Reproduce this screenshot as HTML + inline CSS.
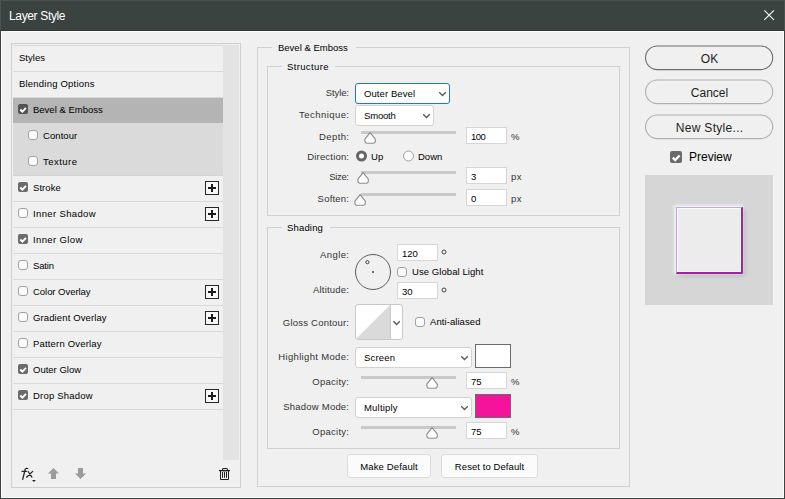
<!DOCTYPE html><html><head><meta charset="utf-8"><style>
html,body{margin:0;padding:0}
body{width:785px;height:499px;overflow:hidden;position:relative;background:#f0f0f0;font-family:"Liberation Sans",sans-serif}
.a{position:absolute}
.t{position:absolute;white-space:nowrap}
</style></head><body>
<div class="a" style="left:0px;top:0px;width:785px;height:31px;background:#3b4341"></div>
<div class="a" style="left:0px;top:0px;width:785px;height:1px;background:#4b5351"></div>
<div class="a" style="left:0px;top:0px;width:1px;height:30px;background:#4b5351"></div>
<div class="a" style="left:784px;top:0px;width:1px;height:30px;background:#4b5351"></div>
<div class="a" style="left:1px;top:30px;width:783px;height:1px;background:#2f3735"></div>
<div class="a" style="left:0px;top:31px;width:1px;height:468px;background:#3b4341"></div>
<div class="a" style="left:784px;top:31px;width:1px;height:468px;background:#3b4341"></div>
<div class="a" style="left:0px;top:498px;width:785px;height:1px;background:#3b4341"></div>
<div class="a" style="left:1px;top:31px;width:1px;height:467px;background:#fdfdfd"></div>
<div class="a" style="left:783px;top:31px;width:1px;height:467px;background:#fdfdfd"></div>
<div class="a" style="left:1px;top:31px;width:783px;height:1px;background:#fdfdfd"></div>
<div class="a" style="left:1px;top:497px;width:783px;height:1px;background:#fdfdfd"></div>
<div id="t0" class="t" style="top:9px;font-size:12px;line-height:14px;color:#ffffff;letter-spacing:-0.350px;left:9px;">Layer Style</div>
<svg class="a" style="left:762px;top:8px" width="14" height="14" viewBox="0 0 14 14"><path d="M2.3 2.3 L11.9 11.9 M11.9 2.3 L2.3 11.9" stroke="#f4f4f4" stroke-width="1.2"/></svg>
<div class="a" style="left:11px;top:43px;width:230px;height:445px;border:1px solid #cfcfcf;box-sizing:border-box"></div>
<div class="a" style="left:223px;top:45px;width:16px;height:415px;background:#e3e3e3"></div>
<div class="a" style="left:13px;top:45px;width:210px;height:1px;background:#d9d9d9"></div>
<div class="a" style="left:13px;top:71px;width:210px;height:1px;background:#d9d9d9"></div>
<div class="a" style="left:13px;top:97px;width:210px;height:1px;background:#d9d9d9"></div>
<div class="a" style="left:13px;top:123px;width:210px;height:1px;background:#d9d9d9"></div>
<div class="a" style="left:13px;top:149px;width:210px;height:1px;background:#d9d9d9"></div>
<div class="a" style="left:13px;top:175px;width:210px;height:1px;background:#d9d9d9"></div>
<div class="a" style="left:13px;top:201px;width:210px;height:1px;background:#d9d9d9"></div>
<div class="a" style="left:13px;top:227px;width:210px;height:1px;background:#d9d9d9"></div>
<div class="a" style="left:13px;top:253px;width:210px;height:1px;background:#d9d9d9"></div>
<div class="a" style="left:13px;top:279px;width:210px;height:1px;background:#d9d9d9"></div>
<div class="a" style="left:13px;top:305px;width:210px;height:1px;background:#d9d9d9"></div>
<div class="a" style="left:13px;top:331px;width:210px;height:1px;background:#d9d9d9"></div>
<div class="a" style="left:13px;top:357px;width:210px;height:1px;background:#d9d9d9"></div>
<div class="a" style="left:13px;top:383px;width:210px;height:1px;background:#d9d9d9"></div>
<div class="a" style="left:13px;top:409px;width:210px;height:1px;background:#d9d9d9"></div>
<div class="a" style="left:13px;top:98px;width:210px;height:25px;background:#b4b4b4"></div>
<div class="a" style="left:13px;top:123px;width:210px;height:52px;background:#dadada"></div>
<div class="a" style="left:13px;top:175px;width:210px;height:1px;background:#d4d4d4"></div>
<div id="t1" class="t" style="top:52px;font-size:9.5px;line-height:11.5px;color:#000;letter-spacing:0.020px;left:19px;">Styles</div>
<div id="t2" class="t" style="top:78px;font-size:9.5px;line-height:11.5px;color:#000;letter-spacing:0.207px;left:19px;">Blending Options</div>
<div class="a" style="left:18px;top:104px;width:10px;height:10px;background:#535353;border-radius:2px;"><svg width="10" height="10" viewBox="0 0 10 10" style="position:absolute;left:0;top:0"><path d="M2.3 5.5 L4.4 7.6 L8 3.8" fill="none" stroke="#fff" stroke-width="1.9" stroke-linecap="butt" stroke-linejoin="miter"/></svg></div>
<div id="t3" class="t" style="top:104px;font-size:9.5px;line-height:11.5px;color:#000;left:33px;">Bevel &amp; Emboss</div>
<div class="a" style="left:28px;top:130px;width:10px;height:10px;background:#fbfbfb;border:1px solid #a2a2a2;box-sizing:border-box;border-radius:3px;"></div>
<div id="t4" class="t" style="top:130px;font-size:9.5px;line-height:11.5px;color:#000;letter-spacing:0.067px;left:43px;">Contour</div>
<div class="a" style="left:28px;top:156px;width:10px;height:10px;background:#fbfbfb;border:1px solid #a2a2a2;box-sizing:border-box;border-radius:3px;"></div>
<div id="t5" class="t" style="top:156px;font-size:9.5px;line-height:11.5px;color:#000;letter-spacing:0.483px;left:43px;">Texture</div>
<div class="a" style="left:18px;top:182px;width:10px;height:10px;background:#6b6b6b;border-radius:2px;"><svg width="10" height="10" viewBox="0 0 10 10" style="position:absolute;left:0;top:0"><path d="M2.3 5.5 L4.4 7.6 L8 3.8" fill="none" stroke="#fff" stroke-width="1.9" stroke-linecap="butt" stroke-linejoin="miter"/></svg></div>
<div id="t6" class="t" style="top:182px;font-size:9.5px;line-height:11.5px;color:#000;letter-spacing:0.060px;left:33px;">Stroke</div>
<div class="a" style="left:205px;top:181px;width:14px;height:14px;border:1px solid #262626;box-sizing:border-box;background:#f7f7f7"></div>
<div class="a" style="left:208px;top:187px;width:8px;height:2px;background:#1a1a1a"></div>
<div class="a" style="left:211px;top:184px;width:2px;height:8px;background:#1a1a1a"></div>
<div class="a" style="left:18px;top:208px;width:10px;height:10px;background:#fbfbfb;border:1px solid #a2a2a2;box-sizing:border-box;border-radius:3px;"></div>
<div id="t7" class="t" style="top:208px;font-size:9.5px;line-height:11.5px;color:#000;letter-spacing:0.364px;left:33px;">Inner Shadow</div>
<div class="a" style="left:205px;top:207px;width:14px;height:14px;border:1px solid #262626;box-sizing:border-box;background:#f7f7f7"></div>
<div class="a" style="left:208px;top:213px;width:8px;height:2px;background:#1a1a1a"></div>
<div class="a" style="left:211px;top:210px;width:2px;height:8px;background:#1a1a1a"></div>
<div class="a" style="left:18px;top:234px;width:10px;height:10px;background:#6b6b6b;border-radius:2px;"><svg width="10" height="10" viewBox="0 0 10 10" style="position:absolute;left:0;top:0"><path d="M2.3 5.5 L4.4 7.6 L8 3.8" fill="none" stroke="#fff" stroke-width="1.9" stroke-linecap="butt" stroke-linejoin="miter"/></svg></div>
<div id="t8" class="t" style="top:234px;font-size:9.5px;line-height:11.5px;color:#000;letter-spacing:0.367px;left:33px;">Inner Glow</div>
<div class="a" style="left:18px;top:260px;width:10px;height:10px;background:#fbfbfb;border:1px solid #a2a2a2;box-sizing:border-box;border-radius:3px;"></div>
<div id="t9" class="t" style="top:260px;font-size:9.5px;line-height:11.5px;color:#000;letter-spacing:-0.150px;left:33px;">Satin</div>
<div class="a" style="left:18px;top:286px;width:10px;height:10px;background:#fbfbfb;border:1px solid #a2a2a2;box-sizing:border-box;border-radius:3px;"></div>
<div id="t10" class="t" style="top:286px;font-size:9.5px;line-height:11.5px;color:#000;letter-spacing:-0.042px;left:33px;">Color Overlay</div>
<div class="a" style="left:205px;top:285px;width:14px;height:14px;border:1px solid #262626;box-sizing:border-box;background:#f7f7f7"></div>
<div class="a" style="left:208px;top:291px;width:8px;height:2px;background:#1a1a1a"></div>
<div class="a" style="left:211px;top:288px;width:2px;height:8px;background:#1a1a1a"></div>
<div class="a" style="left:18px;top:312px;width:10px;height:10px;background:#fbfbfb;border:1px solid #a2a2a2;box-sizing:border-box;border-radius:3px;"></div>
<div id="t11" class="t" style="top:312px;font-size:9.5px;line-height:11.5px;color:#000;letter-spacing:0.120px;left:33px;">Gradient Overlay</div>
<div class="a" style="left:205px;top:311px;width:14px;height:14px;border:1px solid #262626;box-sizing:border-box;background:#f7f7f7"></div>
<div class="a" style="left:208px;top:317px;width:8px;height:2px;background:#1a1a1a"></div>
<div class="a" style="left:211px;top:314px;width:2px;height:8px;background:#1a1a1a"></div>
<div class="a" style="left:18px;top:338px;width:10px;height:10px;background:#fbfbfb;border:1px solid #a2a2a2;box-sizing:border-box;border-radius:3px;"></div>
<div id="t12" class="t" style="top:338px;font-size:9.5px;line-height:11.5px;color:#000;letter-spacing:0.179px;left:33px;">Pattern Overlay</div>
<div class="a" style="left:18px;top:364px;width:10px;height:10px;background:#6b6b6b;border-radius:2px;"><svg width="10" height="10" viewBox="0 0 10 10" style="position:absolute;left:0;top:0"><path d="M2.3 5.5 L4.4 7.6 L8 3.8" fill="none" stroke="#fff" stroke-width="1.9" stroke-linecap="butt" stroke-linejoin="miter"/></svg></div>
<div id="t13" class="t" style="top:364px;font-size:9.5px;line-height:11.5px;color:#000;left:33px;">Outer Glow</div>
<div class="a" style="left:18px;top:390px;width:10px;height:10px;background:#6b6b6b;border-radius:2px;"><svg width="10" height="10" viewBox="0 0 10 10" style="position:absolute;left:0;top:0"><path d="M2.3 5.5 L4.4 7.6 L8 3.8" fill="none" stroke="#fff" stroke-width="1.9" stroke-linecap="butt" stroke-linejoin="miter"/></svg></div>
<div id="t14" class="t" style="top:390px;font-size:9.5px;line-height:11.5px;color:#000;letter-spacing:0.200px;left:33px;">Drop Shadow</div>
<div class="a" style="left:205px;top:389px;width:14px;height:14px;border:1px solid #262626;box-sizing:border-box;background:#f7f7f7"></div>
<div class="a" style="left:208px;top:395px;width:8px;height:2px;background:#1a1a1a"></div>
<div class="a" style="left:211px;top:392px;width:2px;height:8px;background:#1a1a1a"></div>
<svg class="a" style="left:18px;top:464px" width="20" height="20" viewBox="0 0 20 20"><path d="M9.7 4.5 C8.3 3.9 7.3 4.5 7.0 6.0 L4.7 15.4 M4.1 7.4 H8.3 M10.1 7.5 L13.9 13.1 M14.7 7.4 L8.6 13.2" fill="none" stroke="#222" stroke-width="1.25" stroke-linecap="round"/><path d="M14 16.1 H17.9 L15.95 17.9 Z" fill="#222"/></svg>
<svg class="a" style="left:47px;top:467px" width="13" height="13" viewBox="0 0 13 13"><path d="M6.5 1 L12 6.5 L9 6.5 L9 12 L4 12 L4 6.5 L1 6.5Z" fill="#9b9b9b"/></svg>
<svg class="a" style="left:74px;top:467px" width="13" height="13" viewBox="0 0 13 13"><path d="M6.5 12 L12 6.5 L9 6.5 L9 1 L4 1 L4 6.5 L1 6.5Z" fill="#9b9b9b"/></svg>
<svg class="a" style="left:218px;top:467px" width="14" height="14" viewBox="0 0 14 14"><path d="M1 3.6 H12" fill="none" stroke="#222" stroke-width="1.3"/><rect x="4.5" y="1.5" width="5" height="2.2" rx="1" fill="none" stroke="#222" stroke-width="1.1"/><path d="M2.5 3.5 V12.5 H10.5 V3.5 M4.5 5 V10.8 M6.5 5 V10.8 M8.5 5 V10.8" fill="none" stroke="#222" stroke-width="1"/></svg>
<div class="a" style="left:257px;top:47px;width:373px;height:440px;border:1px solid #d0d0d0;box-sizing:border-box"></div>
<div class="a" style="left:272px;top:47px;width:84px;height:1px;background:#f0f0f0"></div>
<div id="t15" class="t" style="top:42px;font-size:9.5px;line-height:11.5px;color:#000;left:278px;">Bevel &amp; Emboss</div>
<div class="a" style="left:267px;top:66px;width:353px;height:150px;border:1px solid #d0d0d0;box-sizing:border-box"></div>
<div class="a" style="left:282px;top:66px;width:53px;height:1px;background:#f0f0f0"></div>
<div id="t16" class="t" style="top:61px;font-size:9.5px;line-height:11.5px;color:#000;letter-spacing:0.362px;left:287px;">Structure</div>
<div class="a" style="left:267px;top:227px;width:353px;height:222px;border:1px solid #d0d0d0;box-sizing:border-box"></div>
<div class="a" style="left:282px;top:227px;width:48px;height:1px;background:#f0f0f0"></div>
<div id="t17" class="t" style="top:222px;font-size:9.5px;line-height:11.5px;color:#000;letter-spacing:0.167px;left:287px;">Shading</div>
<div id="t18" class="t" style="top:87px;font-size:9.5px;line-height:11.5px;color:#333;letter-spacing:-0.100px;right:436.100px;">Style:</div>
<div id="t19" class="t" style="top:109px;font-size:9.5px;line-height:11.5px;color:#333;letter-spacing:0.444px;right:435.556px;">Technique:</div>
<div id="t20" class="t" style="top:131px;font-size:9.5px;line-height:11.5px;color:#333;letter-spacing:0.400px;right:435.600px;">Depth:</div>
<div id="t21" class="t" style="top:151px;font-size:9.5px;line-height:11.5px;color:#333;letter-spacing:0.189px;right:435.811px;">Direction:</div>
<div id="t22" class="t" style="top:171px;font-size:9.5px;line-height:11.5px;color:#333;letter-spacing:-0.350px;right:436.350px;">Size:</div>
<div id="t23" class="t" style="top:193px;font-size:9.5px;line-height:11.5px;color:#333;letter-spacing:0.217px;right:435.783px;">Soften:</div>
<div id="t24" class="t" style="top:249px;font-size:9.5px;line-height:11.5px;color:#333;letter-spacing:0.400px;right:435.600px;">Angle:</div>
<div id="t25" class="t" style="top:284px;font-size:9.5px;line-height:11.5px;color:#333;letter-spacing:0.225px;right:435.775px;">Altitude:</div>
<div id="t26" class="t" style="top:317px;font-size:9.5px;line-height:11.5px;color:#333;letter-spacing:0.215px;right:435.785px;">Gloss Contour:</div>
<div id="t27" class="t" style="top:351px;font-size:9.5px;line-height:11.5px;color:#333;letter-spacing:0.336px;right:435.664px;">Highlight Mode:</div>
<div id="t28" class="t" style="top:376px;font-size:9.5px;line-height:11.5px;color:#333;letter-spacing:0.257px;right:435.743px;">Opacity:</div>
<div id="t29" class="t" style="top:401px;font-size:9.5px;line-height:11.5px;color:#333;letter-spacing:0.209px;right:435.791px;">Shadow Mode:</div>
<div id="t30" class="t" style="top:426px;font-size:9.5px;line-height:11.5px;color:#333;letter-spacing:0.257px;right:435.743px;">Opacity:</div>
<div class="a" style="left:355px;top:83px;width:95px;height:21px;border:1px solid #1a75e0;box-sizing:border-box;border-radius:3px;background:#ffffff"></div>
<div id="t31" class="t" style="top:88px;font-size:9.5px;line-height:11.5px;color:#000;letter-spacing:0.090px;left:364px;">Outer Bevel</div>
<svg class="a" style="left:438px;top:91px" width="9" height="6" viewBox="0 0 9 6"><path d="M1.2 1.3 L4.5 4.5 L7.8 1.3" fill="none" stroke="#5a5a5a" stroke-width="1.35"/></svg>
<div class="a" style="left:355px;top:105px;width:79px;height:21px;border:1px solid #d2d2d2;box-sizing:border-box;border-radius:3px;background:#ffffff"></div>
<div id="t32" class="t" style="top:110px;font-size:9.5px;line-height:11.5px;color:#000;letter-spacing:-0.180px;left:364px;">Smooth</div>
<svg class="a" style="left:422px;top:113px" width="9" height="6" viewBox="0 0 9 6"><path d="M1.2 1.3 L4.5 4.5 L7.8 1.3" fill="none" stroke="#5a5a5a" stroke-width="1.35"/></svg>
<div class="a" style="left:355px;top:347px;width:117px;height:21px;border:1px solid #d2d2d2;box-sizing:border-box;border-radius:3px;background:#ffffff"></div>
<div id="t33" class="t" style="top:352px;font-size:9.5px;line-height:11.5px;color:#000;letter-spacing:0.200px;left:364px;">Screen</div>
<svg class="a" style="left:460px;top:355px" width="9" height="6" viewBox="0 0 9 6"><path d="M1.2 1.3 L4.5 4.5 L7.8 1.3" fill="none" stroke="#5a5a5a" stroke-width="1.35"/></svg>
<div class="a" style="left:355px;top:397px;width:117px;height:21px;border:1px solid #d2d2d2;box-sizing:border-box;border-radius:3px;background:#ffffff"></div>
<div id="t34" class="t" style="top:402px;font-size:9.5px;line-height:11.5px;color:#000;letter-spacing:0.200px;left:364px;">Multiply</div>
<svg class="a" style="left:460px;top:405px" width="9" height="6" viewBox="0 0 9 6"><path d="M1.2 1.3 L4.5 4.5 L7.8 1.3" fill="none" stroke="#5a5a5a" stroke-width="1.35"/></svg>
<div class="a" style="left:361px;top:131px;width:95px;height:3px;background:#c9c9c9"></div>
<svg class="a" style="left:364px;top:131px" width="13" height="14" viewBox="0 0 13 14"><path d="M6.1 1.7 L11.3 8.2 L11.3 10.1 Q11.3 12.3 9.1 12.3 L3.1 12.3 Q0.9 12.3 0.9 10.1 L0.9 8.2 Z" fill="#fcfdfe" stroke="#8c8c8c" stroke-width="1.1" stroke-linejoin="round"/></svg>
<div class="a" style="left:361px;top:171px;width:95px;height:3px;background:#c9c9c9"></div>
<svg class="a" style="left:357px;top:171px" width="13" height="14" viewBox="0 0 13 14"><path d="M6.1 1.7 L11.3 8.2 L11.3 10.1 Q11.3 12.3 9.1 12.3 L3.1 12.3 Q0.9 12.3 0.9 10.1 L0.9 8.2 Z" fill="#fcfdfe" stroke="#8c8c8c" stroke-width="1.1" stroke-linejoin="round"/></svg>
<div class="a" style="left:361px;top:193px;width:95px;height:3px;background:#c9c9c9"></div>
<svg class="a" style="left:354px;top:193px" width="13" height="14" viewBox="0 0 13 14"><path d="M6.1 1.7 L11.3 8.2 L11.3 10.1 Q11.3 12.3 9.1 12.3 L3.1 12.3 Q0.9 12.3 0.9 10.1 L0.9 8.2 Z" fill="#fcfdfe" stroke="#8c8c8c" stroke-width="1.1" stroke-linejoin="round"/></svg>
<div class="a" style="left:361px;top:376px;width:95px;height:3px;background:#c9c9c9"></div>
<svg class="a" style="left:426px;top:376px" width="13" height="14" viewBox="0 0 13 14"><path d="M6.1 1.7 L11.3 8.2 L11.3 10.1 Q11.3 12.3 9.1 12.3 L3.1 12.3 Q0.9 12.3 0.9 10.1 L0.9 8.2 Z" fill="#fcfdfe" stroke="#8c8c8c" stroke-width="1.1" stroke-linejoin="round"/></svg>
<div class="a" style="left:361px;top:426px;width:95px;height:3px;background:#c9c9c9"></div>
<svg class="a" style="left:426px;top:426px" width="13" height="14" viewBox="0 0 13 14"><path d="M6.1 1.7 L11.3 8.2 L11.3 10.1 Q11.3 12.3 9.1 12.3 L3.1 12.3 Q0.9 12.3 0.9 10.1 L0.9 8.2 Z" fill="#fcfdfe" stroke="#8c8c8c" stroke-width="1.1" stroke-linejoin="round"/></svg>
<div class="a" style="left:466px;top:127px;width:41px;height:17px;border:1px solid #d6d6d6;box-sizing:border-box;background:#fff"></div>
<div id="t35" class="t" style="top:131px;font-size:9.5px;line-height:11.5px;color:#000;letter-spacing:-0.500px;left:471px;">100</div>
<div class="a" style="left:466px;top:167px;width:41px;height:17px;border:1px solid #d6d6d6;box-sizing:border-box;background:#fff"></div>
<div id="t36" class="t" style="top:171px;font-size:9.5px;line-height:11.5px;color:#000;left:471px;">3</div>
<div class="a" style="left:466px;top:189px;width:41px;height:17px;border:1px solid #d6d6d6;box-sizing:border-box;background:#fff"></div>
<div id="t37" class="t" style="top:193px;font-size:9.5px;line-height:11.5px;color:#000;left:471px;">0</div>
<div class="a" style="left:397px;top:244px;width:41px;height:17px;border:1px solid #d6d6d6;box-sizing:border-box;background:#fff"></div>
<div id="t38" class="t" style="top:248px;font-size:9.5px;line-height:11.5px;color:#000;left:402px;">120</div>
<div class="a" style="left:397px;top:282px;width:41px;height:17px;border:1px solid #d6d6d6;box-sizing:border-box;background:#fff"></div>
<div id="t39" class="t" style="top:286px;font-size:9.5px;line-height:11.5px;color:#000;left:402px;">30</div>
<div class="a" style="left:466px;top:372px;width:41px;height:17px;border:1px solid #d6d6d6;box-sizing:border-box;background:#fff"></div>
<div id="t40" class="t" style="top:376px;font-size:9.5px;line-height:11.5px;color:#000;left:471px;">75</div>
<div class="a" style="left:466px;top:422px;width:41px;height:17px;border:1px solid #d6d6d6;box-sizing:border-box;background:#fff"></div>
<div id="t41" class="t" style="top:426px;font-size:9.5px;line-height:11.5px;color:#000;left:471px;">75</div>
<div id="t42" class="t" style="top:131px;font-size:9.5px;line-height:11.5px;color:#333;left:511px;">%</div>
<div id="t43" class="t" style="top:171px;font-size:9.5px;line-height:11.5px;color:#333;letter-spacing:0.500px;left:511px;">px</div>
<div id="t44" class="t" style="top:193px;font-size:9.5px;line-height:11.5px;color:#333;letter-spacing:0.500px;left:511px;">px</div>
<div id="t45" class="t" style="top:376px;font-size:9.5px;line-height:11.5px;color:#333;left:511px;">%</div>
<div id="t46" class="t" style="top:426px;font-size:9.5px;line-height:11.5px;color:#333;left:511px;">%</div>
<svg class="a" style="left:441px;top:249px" width="6" height="6"><circle cx="3" cy="3" r="2" fill="none" stroke="#444" stroke-width="1"/></svg>
<svg class="a" style="left:441px;top:287px" width="6" height="6"><circle cx="3" cy="3" r="2" fill="none" stroke="#444" stroke-width="1"/></svg>
<svg class="a" style="left:355px;top:150px" width="13" height="13"><circle cx="6.5" cy="6" r="4" fill="#fff" stroke="#666" stroke-width="3"/></svg>
<div id="t47" class="t" style="top:151px;font-size:9.5px;line-height:11.5px;color:#000;letter-spacing:0.200px;left:371px;">Up</div>
<svg class="a" style="left:402px;top:150px" width="13" height="13"><circle cx="6.5" cy="6" r="5" fill="#fafafa" stroke="#a3a3a3" stroke-width="1"/></svg>
<div id="t48" class="t" style="top:151px;font-size:9.5px;line-height:11.5px;color:#000;left:418px;">Down</div>
<svg class="a" style="left:354px;top:253px" width="38" height="38"><circle cx="19" cy="19" r="17.5" fill="none" stroke="#5a5a5a" stroke-width="1"/><circle cx="13.4" cy="9.2" r="1.6" fill="none" stroke="#444" stroke-width="1"/><circle cx="19" cy="19" r="1" fill="#444"/></svg>
<div class="a" style="left:397px;top:267px;width:10px;height:10px;background:#fbfbfb;border:1px solid #a2a2a2;box-sizing:border-box;border-radius:3px;"></div>
<div id="t49" class="t" style="top:266px;font-size:9.5px;line-height:11.5px;color:#000;letter-spacing:0.073px;left:412px;">Use Global Light</div>
<div class="a" style="left:355px;top:304px;width:48px;height:36px;border:1px solid #c8c8c8;box-sizing:border-box;border-radius:3px;background:#fff;overflow:hidden"></div>
<svg class="a" style="left:356px;top:305px" width="34" height="34"><path d="M0 34 L34 0 L34 34Z" fill="#dadada"/></svg>
<div class="a" style="left:390px;top:305px;width:1px;height:34px;background:#c8c8c8"></div>
<svg class="a" style="left:392px;top:320px" width="9" height="6" viewBox="0 0 9 6"><path d="M1.4 1.3 L4.6 4.5 L7.8 1.3" fill="none" stroke="#5a5a5a" stroke-width="1.35"/></svg>
<div class="a" style="left:415px;top:317px;width:10px;height:10px;background:#fbfbfb;border:1px solid #a2a2a2;box-sizing:border-box;border-radius:3px;"></div>
<div id="t50" class="t" style="top:316px;font-size:9.5px;line-height:11.5px;color:#000;letter-spacing:0.073px;left:430px;">Anti-aliased</div>
<div class="a" style="left:475px;top:344px;width:36px;height:24px;border:1px solid #6b6b6b;box-sizing:border-box;background:#ffffff"></div>
<div class="a" style="left:475px;top:394px;width:36px;height:24px;border:1px solid #6b6b6b;box-sizing:border-box;background:#f4139a"></div>
<div class="a" style="left:347px;top:454px;width:84px;height:24px;border:1px solid #dcdcdc;box-sizing:border-box;border-radius:3px;background:#fbfbfb"></div>
<div id="t51" class="t" style="top:461px;font-size:9.5px;line-height:11.5px;color:#000;letter-spacing:0.136px;left:347px;width:84px;text-align:center;text-indent:0.136px;">Make Default</div>
<div class="a" style="left:441px;top:454px;width:97px;height:24px;border:1px solid #dcdcdc;box-sizing:border-box;border-radius:3px;background:#fbfbfb"></div>
<div id="t52" class="t" style="top:461px;font-size:9.5px;line-height:11.5px;color:#000;letter-spacing:0.080px;left:441px;width:97px;text-align:center;text-indent:0.080px;">Reset to Default</div>
<svg class="a" style="left:644px;top:44px" width="132" height="28"><rect x="1.5" y="2" width="127.2" height="23.6" rx="11.8" fill="none" stroke="#6e6e6e" stroke-width="1.1"/></svg>
<div class="t" style="left:645px;width:129px;text-align:center;top:52px;font-size:12px;line-height:14px;color:#1e1e1e;letter-spacing:0px;text-indent:0px">OK</div>
<svg class="a" style="left:644px;top:78px" width="132" height="28"><rect x="1.5" y="2" width="127.2" height="23.6" rx="11.8" fill="none" stroke="#b0b0b0" stroke-width="1.1"/></svg>
<div class="t" style="left:645px;width:129px;text-align:center;top:86px;font-size:12px;line-height:14px;color:#1e1e1e;letter-spacing:0px;text-indent:0px">Cancel</div>
<svg class="a" style="left:644px;top:113px" width="132" height="28"><rect x="1.5" y="2" width="127.2" height="23.6" rx="11.8" fill="none" stroke="#b0b0b0" stroke-width="1.1"/></svg>
<div class="t" style="left:645px;width:129px;text-align:center;top:121px;font-size:12px;line-height:14px;color:#1e1e1e;letter-spacing:0.3px;text-indent:0.3px">New Style...</div>
<div class="a" style="left:670px;top:151px;width:12px;height:12px;background:#6b6b6b;border-radius:2px;"><svg width="12" height="12" viewBox="0 0 10 10" style="position:absolute;left:0;top:0"><path d="M2.3 5.5 L4.4 7.6 L8 3.8" fill="none" stroke="#fff" stroke-width="1.9" stroke-linecap="butt" stroke-linejoin="miter"/></svg></div>
<div id="t53" class="t" style="top:150px;font-size:12px;line-height:14px;color:#000;left:689px;">Preview</div>
<div class="a" style="left:645px;top:175px;width:128px;height:130px;background:#d6d6d6"></div>
<div class="a" style="left:773px;top:176px;width:1px;height:129px;background:#f6f6f6"></div>
<div class="a" style="left:676px;top:207px;width:67px;height:67px;background:#ececec;border-left:1px solid #c6a2db;border-top:1px solid #c9a8dd;border-right:2px solid #a0249c;border-bottom:2px solid #a0249c;box-sizing:border-box;border-bottom-right-radius:2px;box-shadow:inset 1px 1px 0 #fafafa, inset -1px -1px 0 #f8f8f8, -1px -1px 3px 1px rgba(240,246,250,0.95), 2px 2px 4px rgba(100,110,120,0.28)"></div>
</body></html>
